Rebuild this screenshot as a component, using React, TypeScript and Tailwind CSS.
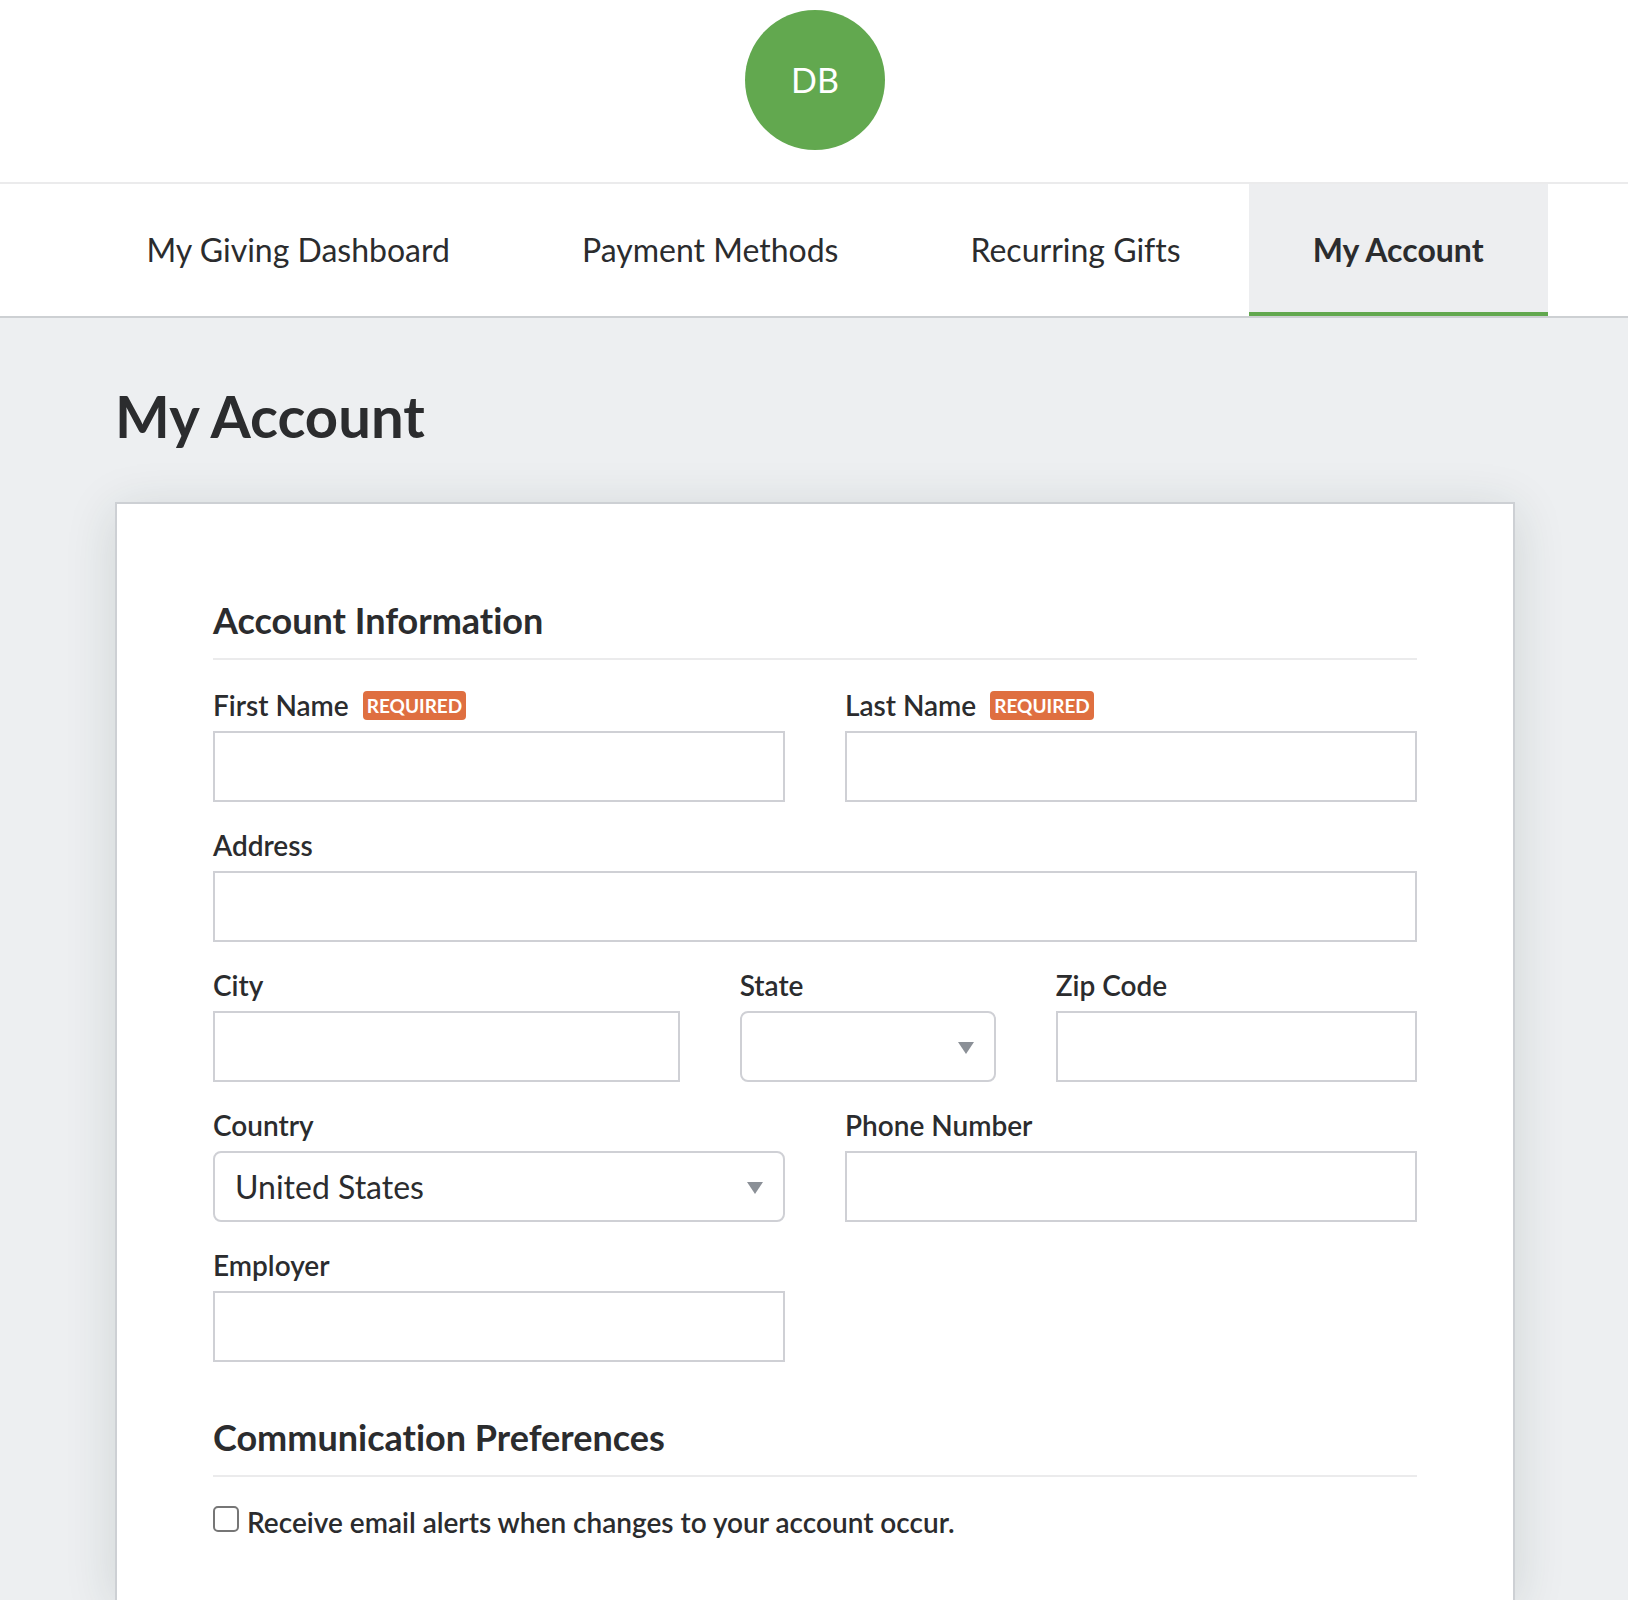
import type { ReactNode } from 'react';
import clsx from 'clsx';

const tabs = [
  { label: 'My Giving Dashboard', href: '#dashboard' },
  { label: 'Payment Methods', href: '#payment-methods' },
  { label: 'Recurring Gifts', href: '#recurring-gifts' },
  { label: 'My Account', href: '#account', active: true },
];

const controlClass = 'block w-full h-[71px] px-5 bg-white border-2 border-[#cfd0d5] text-[32px] outline-none focus:border-[#62a84f]';

function Field({ id, label, required, className, children }: {
  id: string;
  label: string;
  required?: boolean;
  className: string;
  children?: ReactNode;
}) {
  return (
    <div className={className}>
      <div className="flex items-center gap-3.5 h-[34px] mb-[9px]">
        <label htmlFor={id} className="text-[28px] leading-8 font-semibold whitespace-nowrap">{label}</label>
        {required && (
          <span className="px-1 rounded bg-[#df6f40] text-white text-[19px] leading-[29px] font-bold">REQUIRED</span>
        )}
      </div>
      {children ?? <input id={id} name={id} type="text" required={required} className={controlClass} />}
    </div>
  );
}

function Select({ id, options }: { id: string; options: string[] }) {
  return (
    <div className="relative">
      <select id={id} name={id} className={clsx(controlClass, 'appearance-none rounded-lg pr-12')}>
        {options.map((option) => (
          <option key={option} value={option}>{option}</option>
        ))}
      </select>
      <svg width="16" height="12" viewBox="0 0 16 12" className="absolute right-[22px] top-[31px] pointer-events-none" aria-hidden="true">
        <path d="M0 0h16L8 12z" fill="#8b9097" />
      </svg>
    </div>
  );
}

function SectionTitle({ children }: { children: ReactNode }) {
  return (
    <h2 className="pb-[18px] border-b-2 border-[#ebebec] text-[36px] leading-10 font-bold">{children}</h2>
  );
}

export default function App() {
  return (
    <div className="min-h-screen flex flex-col bg-[#edeff1] text-[#2b2c2e] font-[Lato,'Liberation_Sans',sans-serif] [font-variant-ligatures:none]">
      <header className="bg-white border-b-2 border-[#ebebec] pl-0.5 pt-2.5 pb-8 flex justify-center">
        <div className="size-[140px] pb-0.5 rounded-full bg-[#62a84f] text-white text-[34px] flex items-center justify-center">DB</div>
      </header>

      <nav className="bg-white border-b-2 border-[#cdd0d3] pl-0.5 flex justify-center gap-1">
        {tabs.map((tab) => (
          <a
            key={tab.label}
            href={tab.href}
            aria-current={tab.active ? 'page' : undefined}
            className={clsx(
              'px-16 pt-12 pb-11 border-b-4 text-[32px] leading-9 whitespace-nowrap',
              tab.active ? 'bg-[#edeef0] border-[#62a84f] font-bold' : 'border-transparent',
            )}
          >
            {tab.label}
          </a>
        ))}
      </nav>

      <main className="flex-1 flex flex-col w-full max-w-[1402px] mx-auto pl-0.5 pt-[66px]">
        <h1 className="mb-[54px] text-[58px] leading-[64px] font-bold">My Account</h1>

        <form className="flex-1 bg-white border-2 border-b-0 border-[#cdd0d4] px-24 pt-24 pb-14 shadow-[0_8px_48px_rgba(30,55,50,0.14)]">
          <SectionTitle>Account Information</SectionTitle>
          <div className="grid grid-cols-12 gap-x-[60px] gap-y-[26px] mt-7">
            <Field id="first-name" label="First Name" required className="col-span-6" />
            <Field id="last-name" label="Last Name" required className="col-span-6" />
            <Field id="address" label="Address" className="col-span-12" />
            <Field id="city" label="City" className="col-span-5" />
            <Field id="state" label="State" className="col-span-3">
              <Select id="state" options={['']} />
            </Field>
            <Field id="zip" label="Zip Code" className="col-span-4" />
            <Field id="country" label="Country" className="col-span-6">
              <Select id="country" options={['United States']} />
            </Field>
            <Field id="phone" label="Phone Number" className="col-span-6" />
            <Field id="employer" label="Employer" className="col-span-6" />
          </div>

          <div className="mt-[55px]">
            <SectionTitle>Communication Preferences</SectionTitle>
            <div className="flex items-start gap-2 mt-[29px]">
              <input
                id="email-alerts"
                type="checkbox"
                className="appearance-none shrink-0 size-[26px] rounded-[5px] border-2 border-[#767676] bg-white checked:bg-[#62a84f]"
              />
              <label htmlFor="email-alerts" className="text-[28px] leading-8 font-semibold">
                Receive email alerts when changes to your account occur.
              </label>
            </div>
          </div>
        </form>
      </main>
    </div>
  );
}
